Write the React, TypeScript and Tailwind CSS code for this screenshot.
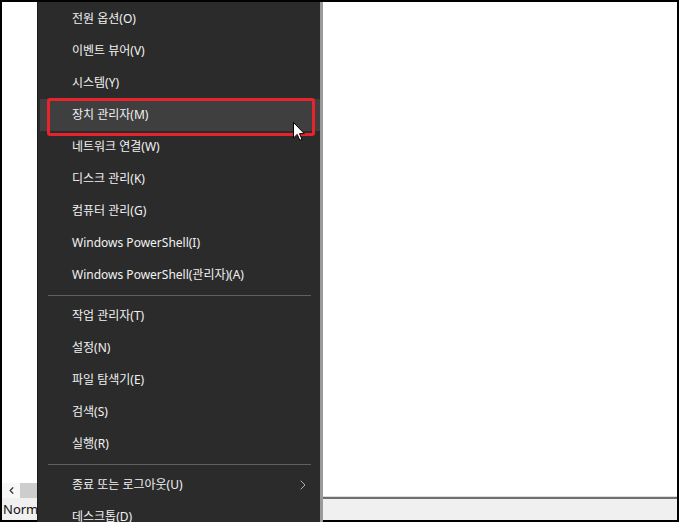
import { ChevronLeft, ChevronRight } from "lucide-react";

type item = { label: string; hover?: boolean; sub?: boolean };

const groups: item[][] = [
  [
    { label: "전원 옵션(O)" },
    { label: "이벤트 뷰어(V)" },
    { label: "시스템(Y)" },
    { label: "장치 관리자(M)", hover: true },
    { label: "네트워크 연결(W)" },
    { label: "디스크 관리(K)" },
    { label: "컴퓨터 관리(G)" },
    { label: "Windows PowerShell(I)" },
    { label: "Windows PowerShell(관리자)(A)" },
  ],
  [
    { label: "작업 관리자(T)" },
    { label: "설정(N)" },
    { label: "파일 탐색기(E)" },
    { label: "검색(S)" },
    { label: "실행(R)" },
  ],
  [{ label: "종료 또는 로그아웃(U)", sub: true }, { label: "데스크톱(D)" }],
];

function MenuRow({ label, hover, sub }: item) {
  return (
    <div
      className={`relative flex h-[32px] shrink-0 items-center pl-[32px] pr-[9px] text-[12px] text-[#f2f2f2] ${
        hover ? "bg-[#3f3f3f]" : ""
      }`}
    >
      <span className="flex-1">{label}</span>
      {sub && (
        <ChevronRight
          size={16}
          strokeWidth={1.2}
          className="text-[#d0d0d0]"
        />
      )}
      {hover && (
        <>
          {/* annotation box from the screenshot */}
          <div className="absolute top-[-1px] right-[5px] bottom-[-5px] left-[7px] rounded-[3px] border-[3px] border-[#e8232b]" />
          {/* mouse pointer */}
          <svg
            className="absolute top-[23px] left-[253px]"
            width="12"
            height="19"
            viewBox="0 0 12 19"
          >
            <path
              d="M0.5 0.5 L0.5 16 L4.2 12.4 L6.8 18.3 L9 17.4 L6.5 11.6 L11.3 11.6 Z"
              fill="#fff"
              stroke="#000"
              strokeWidth="1"
              strokeLinejoin="round"
            />
          </svg>
        </>
      )}
    </div>
  );
}

export default function App() {
  return (
    <div
      className="h-[522px] w-[679px] overflow-hidden bg-black p-[2px]"
      style={{ fontFamily: '"Noto Sans", "Noto Sans CJK KR", sans-serif' }}
    >
      <div className="relative flex h-full w-full flex-col bg-white">
        <div className="flex-1" />

        {/* window bottom: scrollbar + status bar */}
        <div className="flex h-[37px] shrink-0">
          <div className="flex w-[35px] flex-col">
            <div className="flex h-[15px] items-center">
              <div className="flex h-full w-[18px] items-center justify-center bg-[#f7f7f7] text-[#333]">
                <ChevronLeft size={11} strokeWidth={2.6} />
              </div>
              <div className="h-full flex-1 bg-[#cdcdcd]" />
            </div>
            <div className="flex-1 bg-[#f0f0f0] pl-[1px] pt-[2px] text-[13px] leading-[18px] text-[#111]">
              Normal
            </div>
          </div>
          <div className="flex flex-1 flex-col">
            <div className="h-[13px] bg-white" />
            <div className="h-[1px] bg-[#dcdcdc]" />
            <div className="h-[2px] bg-[#6f6f6f]" />
            <div className="flex-1 bg-[#f0f0f0]" />
          </div>
        </div>

        {/* start button context menu */}
        <div className="absolute top-0 bottom-[-2px] left-[35px] flex w-[286px] flex-col border-l border-r-[3px] border-l-[#1c1c1c] border-r-[#9a9a9a] bg-[#2b2b2b] pl-[2px] pt-[1px]">
          {groups.map((g, gi) => (
            <div key={gi} className="flex flex-col">
              {gi > 0 && (
                <div className="flex h-[9px] shrink-0 items-center pl-[8px] pr-[9px]">
                  <div className="h-[1px] w-full bg-[#606060]" />
                </div>
              )}
              {g.map((it) => (
                <MenuRow key={it.label} {...it} />
              ))}
            </div>
          ))}
        </div>
      </div>
    </div>
  );
}
